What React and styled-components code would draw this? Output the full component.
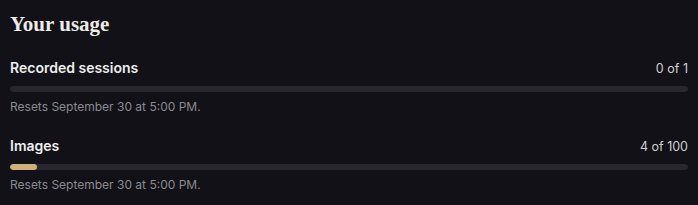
import React from "react";
import styled, { createGlobalStyle } from "styled-components";

const Global = createGlobalStyle`
  html, body { margin: 0; padding: 0; background: #121117; }
  body { font-family: Inter, "Liberation Sans", sans-serif; }
`;

const Panel = styled.section`
  width: 698px;
  height: 205px;
  box-sizing: border-box;
  padding: 12px 10px 0 10px;
  background: #121117;
  display: flex;
  flex-direction: column;
`;

const Title = styled.h2`
  margin: 0 0 23px 0;
  font-family: "Liberation Serif", "DejaVu Serif", serif;
  font-weight: 700;
  font-size: 21px;
  line-height: 24px;
  color: #ecebe6;
`;

const Item = styled.div`
  display: flex;
  flex-direction: column;
  margin-bottom: ${(p) => p.$gap}px;
`;

const Row = styled.div`
  display: flex;
  justify-content: space-between;
  align-items: baseline;
  height: 18px;
`;

const Label = styled.span`
  font-size: 14px;
  font-weight: 600;
  color: #eeeeee;
  line-height: 18px;
`;

const Count = styled.span`
  font-size: 12.5px;
  font-weight: 400;
  color: #cfcfd2;
  line-height: 18px;
`;

const Track = styled.div`
  margin-top: 9px;
  height: 6px;
  border-radius: 3px;
  background: #27272d;
  overflow: hidden;
`;

const Fill = styled.div`
  height: 100%;
  border-radius: 3px;
  background: #cfb078;
`;

const Note = styled.span`
  margin-top: 8px;
  font-size: 12px;
  line-height: 14px;
  color: #8b8a90;
`;

const items = [
  { label: "Recorded sessions", used: 0, total: 1 },
  { label: "Images", used: 4, total: 100 },
];

export default function App() {
  return (
    <>
      <Global />
      <Panel>
        <Title>Your usage</Title>
        {items.map((it, i) => (
          <Item key={it.label} $gap={i === 0 ? 23 : 0}>
            <Row>
              <Label>{it.label}</Label>
              <Count>
                {it.used} of {it.total}
              </Count>
            </Row>
            <Track>
              {it.used > 0 && (
                <Fill style={{ width: `${(it.used / it.total) * 100}%` }} />
              )}
            </Track>
            <Note>Resets September 30 at 5:00 PM.</Note>
          </Item>
        ))}
      </Panel>
    </>
  );
}
